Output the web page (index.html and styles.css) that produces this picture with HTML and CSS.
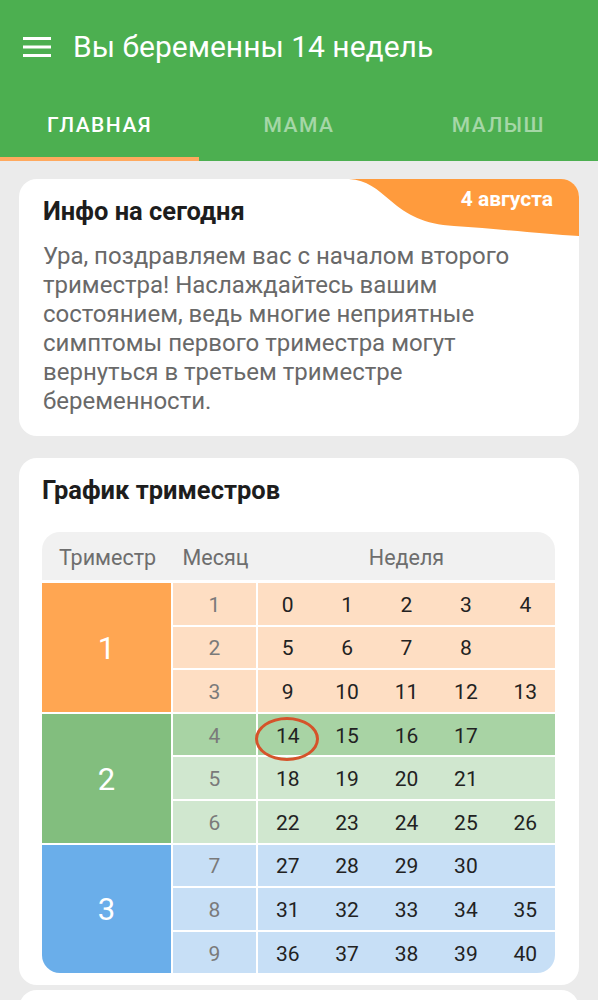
FILE: index.html
```html
<!DOCTYPE html>
<html lang="ru">
<head>
<meta charset="utf-8">
<title>Беременность</title>
<link rel="stylesheet" href="styles.css">
</head>
<body>
<header class="header">
  <div class="appbar">
    <svg class="menu" width="28" height="20" viewBox="0 0 28 20"><rect x="0" y="0" width="28" height="3" fill="#fff"/><rect x="0" y="8.5" width="28" height="3" fill="#fff"/><rect x="0" y="17" width="28" height="3" fill="#fff"/></svg>
    <h1 class="title">Вы беременны 14 недель</h1>
  </div>
  <nav class="tabs">
    <div class="tab active">ГЛАВНАЯ</div>
    <div class="tab">МАМА</div>
    <div class="tab">МАЛЫШ</div>
  </nav>
</header>
<main class="content">
  <section class="card info">
    <div class="badge">
      <svg class="badge-bg" width="230" height="58" viewBox="0 0 230 58" preserveAspectRatio="none"><path d="M0,0 L230,0 L230,57 C195,55 150,50 105,47 C75,45 58,36 42,22 C28,10 18,1 0,0 Z" fill="#FF9B3D"/></svg>
      <span class="badge-text">4 августа</span>
    </div>
    <h2 class="card-title">Инфо на сегодня</h2>
    <p class="info-text">Ура, поздравляем вас с началом второго триместра! Наслаждайтесь вашим состоянием, ведь многие неприятные симптомы первого триместра могут вернуться в третьем триместре беременности.</p>
  </section>
  <section class="card chart">
    <h2 class="card-title">График триместров</h2>
    <div class="table">
      <div class="thead">
        <div class="th">Триместр</div>
        <div class="th">Месяц</div>
        <div class="th">Неделя</div>
      </div>
      <div class="tbody">
        <div class="tri t1">1</div>
        <div class="month t1l">1</div>
        <div class="weeks t1l"><span>0</span><span>1</span><span>2</span><span>3</span><span>4</span></div>
        <div class="month t1l">2</div>
        <div class="weeks t1l"><span>5</span><span>6</span><span>7</span><span>8</span><span></span></div>
        <div class="month t1l">3</div>
        <div class="weeks t1l"><span>9</span><span>10</span><span>11</span><span>12</span><span>13</span></div>

        <div class="tri t2">2</div>
        <div class="month t2h">4</div>
        <div class="weeks t2h"><span class="current">14</span><span>15</span><span>16</span><span>17</span><span></span></div>
        <div class="month t2l">5</div>
        <div class="weeks t2l"><span>18</span><span>19</span><span>20</span><span>21</span><span></span></div>
        <div class="month t2l">6</div>
        <div class="weeks t2l"><span>22</span><span>23</span><span>24</span><span>25</span><span>26</span></div>

        <div class="tri t3">3</div>
        <div class="month t3l">7</div>
        <div class="weeks t3l"><span>27</span><span>28</span><span>29</span><span>30</span><span></span></div>
        <div class="month t3l">8</div>
        <div class="weeks t3l"><span>31</span><span>32</span><span>33</span><span>34</span><span>35</span></div>
        <div class="month t3l">9</div>
        <div class="weeks t3l"><span>36</span><span>37</span><span>38</span><span>39</span><span>40</span></div>
      </div>
    </div>
  </section>
  <section class="card next"></section>
</main>
</body>
</html>
```
FILE: styles.css
```css
* { box-sizing: border-box; }
html, body { margin: 0; padding: 0; }
body {
  background: #ebebeb;
  font-family: Roboto, "Noto Sans", "Liberation Sans", sans-serif;
  width: 598px;
  height: 1000px;
  overflow: hidden;
}
.header {
  background: #4caf50;
  color: #fff;
}
.appbar {
  height: 95px;
  display: flex;
  align-items: center;
  padding: 0 0 2px 23px;
}
.menu { display: block; }
.title {
  margin: 0 0 0 22px;
  font-size: 30px;
  font-weight: 400;
}
.tabs {
  display: flex;
  height: 66px;
}
.tab {
  flex: 1;
  display: flex;
  align-items: center;
  justify-content: center;
  font-size: 21px;
  font-weight: 500;
  letter-spacing: 1.5px;
  color: rgba(255,255,255,0.5);
  padding-bottom: 3px;
  border-bottom: 4px solid transparent;
}
.tab.active {
  color: #fff;
  border-bottom-color: #ffa95e;
}
.content {
  padding: 18px 19px 0;
  display: flex;
  flex-direction: column;
}
.card {
  background: #fff;
  border-radius: 18px;
  position: relative;
  overflow: hidden;
}
.info {
  padding: 17px 24px 20px;
  margin-bottom: 22px;
}
.badge {
  position: absolute;
  top: 0;
  right: 0;
  width: 230px;
  height: 58px;
}
.badge-bg { position: absolute; top: 0; left: 0; }
.badge-text {
  position: absolute;
  right: 26px;
  top: 8px;
  font-size: 21px;
  font-weight: 700;
  color: #fff;
}
.card-title {
  margin: 0;
  font-size: 25.5px;
  font-weight: 700;
  color: #1d1d1d;
  line-height: 30px;
}
.info-text {
  margin: 16px 0 0;
  font-size: 24px;
  line-height: 29px;
  color: #696969;
}
.chart {
  padding: 17px 24px 12px 23px;
  margin-bottom: 5px;
}
.table {
  margin-top: 27px;
  border-radius: 18px;
  overflow: hidden;
}
.thead {
  display: grid;
  grid-template-columns: 131px 85px 1fr;
  height: 48px;
  background: #f1f1f1;
  margin-bottom: 3px;
}
.th {
  display: flex;
  align-items: center;
  justify-content: center;
  font-size: 21.5px;
  color: #6e6e6e;
  padding-top: 2px;
}
.tbody {
  display: grid;
  grid-template-columns: 129px 83px 1fr;
  grid-auto-rows: 41.6px;
  gap: 2px;
  background: #fff;
}
.tri {
  grid-row: span 3;
  grid-column: 1;
  display: flex;
  align-items: center;
  justify-content: center;
  color: #fff;
  font-size: 31px;
  padding-top: 2px;
}
.month {
  grid-column: 2;
  display: flex;
  align-items: center;
  justify-content: center;
  font-size: 21px;
  color: #7a7a7a;
  padding-top: 2px;
}
.weeks {
  grid-column: 3;
  display: flex;
  align-items: center;
  padding-top: 2px;
}
.weeks span {
  flex: 1;
  text-align: center;
  font-size: 21px;
  color: #222;
  position: relative;
}
.current::after {
  content: "";
  position: absolute;
  left: 50%;
  top: 50%;
  width: 58px;
  height: 38px;
  margin: -19px 0 0 -33px;
  border: 3px solid #d5532a;
  border-radius: 50%;
}
.t1 { background: #ffa652; }
.t1l { background: #fedec3; }
.t2 { background: #82be7e; }
.t2h { background: #a8d3a4; }
.t2l { background: #d0e7cf; }
.t3 { background: #6aaeea; }
.t3l { background: #c7dff6; }
.next {
  height: 40px;
  border-radius: 18px 18px 0 0;
}
```
